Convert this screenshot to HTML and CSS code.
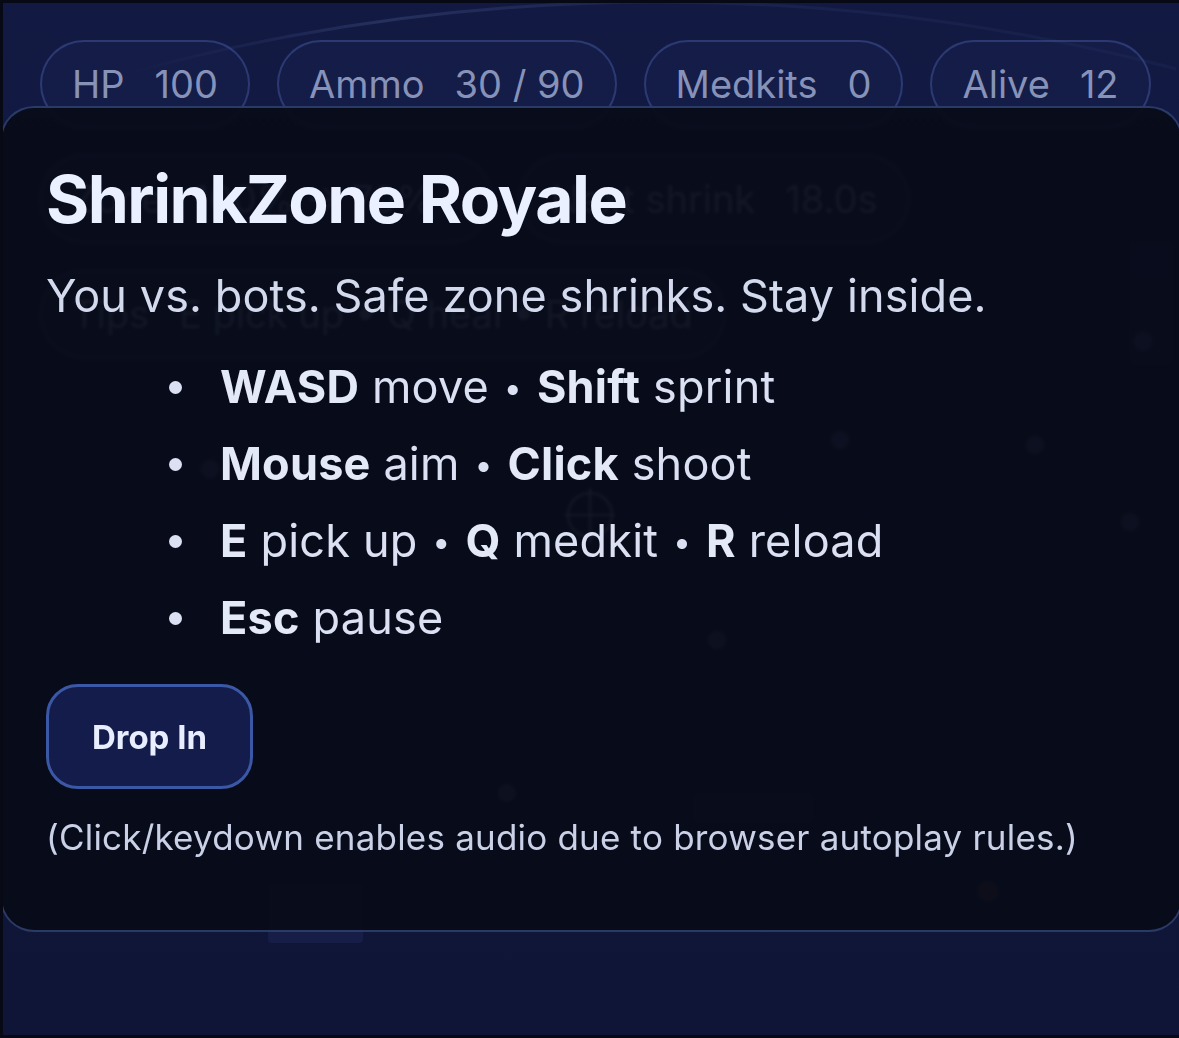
FILE: index.html
```html
<!DOCTYPE html>
<html lang="en">
<head>
<meta charset="utf-8">
<title>ShrinkZone Royale</title>
<link rel="stylesheet" href="styles.css">
</head>
<body>
<div class="frame">
  <main class="stage">
    <!-- game world: zone ring, player crosshair, bots and loot -->
    <svg class="arena" viewBox="0 0 1173 1032" width="1173" height="1032" aria-hidden="true">
      <defs>
        <linearGradient id="ringGlow" gradientUnits="userSpaceOnUse" x1="120" y1="0" x2="1173" y2="0">
          <stop offset="0" stop-color="#6f86d6" stop-opacity="0"/>
          <stop offset="0.25" stop-color="#8ea2e6" stop-opacity="0.16"/>
          <stop offset="0.5" stop-color="#8ea2e6" stop-opacity="0.07"/>
          <stop offset="1" stop-color="#6f86d6" stop-opacity="0.05"/>
        </linearGradient>
      </defs>
      <circle cx="657" cy="2022" r="2023" fill="none" stroke="url(#ringGlow)" stroke-width="3"/>
      <g class="walls" fill="#2a3874" opacity="0.25">
        <rect x="265" y="880" width="95" height="60" rx="4"/>
        <rect x="1128" y="240" width="40" height="120" rx="4"/>
        <rect x="690" y="790" width="120" height="30" rx="4"/>
      </g>
      <g class="crosshair" stroke="#b3c0ea" stroke-width="2" fill="none" opacity="0.85">
        <circle cx="587" cy="512" r="22"/>
        <line x1="562" y1="512" x2="612" y2="512"/>
        <line x1="587" y1="485" x2="587" y2="540"/>
      </g>
      <g class="bots" fill="#6b7bb8" opacity="0.5">
        <circle cx="837" cy="437" r="9"/>
        <circle cx="1032" cy="442" r="9"/>
        <circle cx="1127" cy="519" r="9"/>
        <circle cx="714" cy="637" r="9"/>
        <circle cx="504" cy="790" r="9"/>
        <circle cx="1140" cy="338" r="9"/>
        <circle cx="207" cy="466" r="9"/>
      </g>
      <circle cx="985" cy="888" r="10" fill="#a8603c" opacity="0.45"/>
    </svg>

    <header class="hud">
      <div class="hud-row">
        <div class="pill"><span>HP</span><span>100</span></div>
        <div class="pill"><span>Ammo</span><span>30 / 90</span></div>
        <div class="pill"><span>Medkits</span><span>0</span></div>
        <div class="pill"><span>Alive</span><span>12</span></div>
      </div>
      <div class="hud-row">
        <div class="pill pill-zone"><span>Zone</span><span>100% → 70%</span></div>
        <div class="pill"><span>Next shrink</span><span>18.0s</span></div>
      </div>
      <div class="hud-row">
        <div class="pill"><span>Tips</span><span>E pick up • Q heal • R reload</span></div>
      </div>
    </header>

    <section class="panel">
      <h1 class="title">ShrinkZone Royale</h1>
      <p class="lead">You vs. bots. Safe zone shrinks. Stay inside.</p>
      <ul class="controls">
        <li><b>WASD</b> move <span class="sep">•</span> <b>Shift</b> sprint</li>
        <li><b>Mouse</b> aim <span class="sep">•</span> <b>Click</b> shoot</li>
        <li><b>E</b> pick up <span class="sep">•</span> <b>Q</b> medkit <span class="sep">•</span> <b>R</b> reload</li>
        <li><b>Esc</b> pause</li>
      </ul>
      <button class="drop" type="button">Drop In</button>
      <p class="note">(Click/keydown enables audio due to browser autoplay rules.)</p>
    </section>
  </main>
</div>
</body>
</html>
```

FILE: styles.css
```css
html, body {
  margin: 0;
  padding: 0;
  background: #070a14;
}

body {
  font-family: Inter, "Noto Sans", "Liberation Sans", sans-serif;
}

.frame {
  width: 1179px;
  height: 1038px;
  box-sizing: border-box;
  padding: 3px 0 3px 3px;
}

.stage {
  position: relative;
  height: 1032px;
  overflow: hidden;
  background: linear-gradient(180deg, #121a43 0%, #111940 45%, #0f1536 100%);
}

.arena {
  position: absolute;
  left: 0;
  top: 0;
}

/* HUD pills */
.hud {
  position: relative;
  display: flex;
  flex-direction: column;
  gap: 27px;
  padding: 37px 0 0 37px;
}

.hud-row {
  display: flex;
  gap: 27px;
}

.pill {
  display: flex;
  align-items: center;
  gap: 30px;
  height: 88px;
  box-sizing: border-box;
  padding: 0 30px;
  border: 2px solid rgba(86, 112, 192, 0.36);
  border-radius: 44px;
  background: rgba(40, 52, 110, 0.12);
  color: #8792b9;
  font-size: 38px;
  font-weight: 400;
  white-space: nowrap;
}

.pill-zone {
  padding-right: 56px;
}

/* start overlay */
.panel {
  position: absolute;
  left: -3px;
  right: -4px;
  top: 103px;
  height: 826px;
  box-sizing: border-box;
  padding: 51px 44px 0 44px;
  border: 2px solid rgba(78, 104, 178, 0.5);
  border-radius: 34px;
  background: rgba(8, 11, 23, 0.915);
  backdrop-filter: blur(1.5px);
}

.title {
  margin: 0;
  font-size: 66px;
  line-height: 80px;
  font-weight: 700;
  letter-spacing: -1.5px;
  color: #eaf0ff;
}

.lead {
  margin: 30px 0 0;
  font-size: 45px;
  line-height: 54px;
  letter-spacing: 0.1px;
  color: #d4daed;
}

.controls {
  margin: 25px 0 0;
  padding: 0 0 0 174px;
  list-style: none;
}

.controls li {
  font-size: 45px;
  line-height: 77px;
  height: 77px;
  letter-spacing: 0.2px;
  color: #dbe1f3;
}

.controls li::before {
  content: "";
  display: inline-block;
  width: 13px;
  height: 13px;
  border-radius: 50%;
  background: #dbe1f3;
  margin: 0 38px 0 -51px;
  vertical-align: middle;
  position: relative;
  top: -3px;
}

.controls .sep {
  font-size: 32px;
  line-height: 0;
  padding: 0 2px;
  vertical-align: 4px;
}

.controls b {
  font-weight: 700;
  color: #e4e9f8;
}

.drop {
  display: block;
  margin-top: 28px;
  width: 207px;
  height: 105px;
  box-sizing: border-box;
  border: 3px solid #3b58a6;
  border-radius: 32px;
  background: #131c4b;
  color: #e8eeff;
  font-family: inherit;
  font-size: 33px;
  font-weight: 700;
  padding: 0;
}

.note {
  margin: 27px 0 0;
  font-size: 35px;
  line-height: 42px;
  letter-spacing: 0.2px;
  color: #cad1e7;
}
```
